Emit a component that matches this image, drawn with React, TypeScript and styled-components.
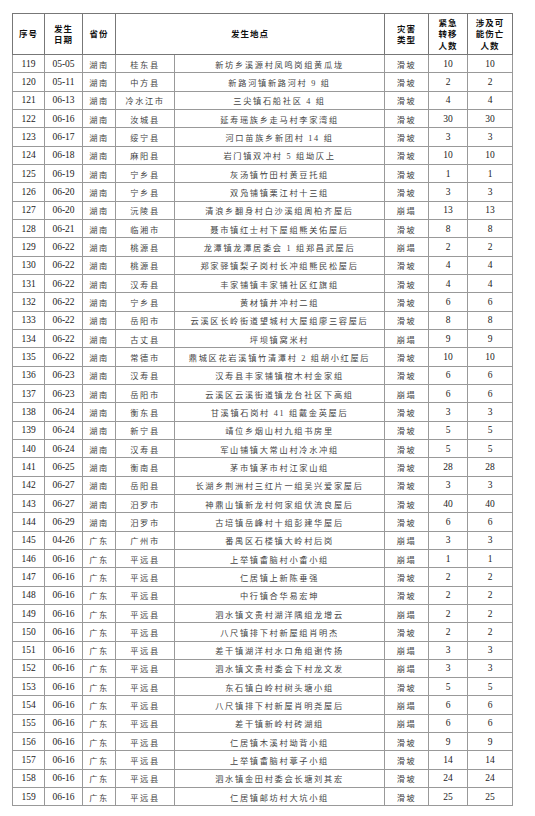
import React from 'react';
import styled, { createGlobalStyle } from 'styled-components';

const GlobalStyle = createGlobalStyle`
  html, body {
    margin: 0;
    padding: 0;
    background: #fff;
  }
`;

type Row = [number, string, string, string, string, string, number, number];

const rows: Row[] = [
  [119, '05-05', '湖南', '桂东县', '新坊乡溪源村凤鸣岗组黄瓜垅', '滑坡', 10, 10],
  [120, '05-11', '湖南', '中方县', '新路河镇新路河村 9 组', '滑坡', 2, 2],
  [121, '06-13', '湖南', '冷水江市', '三尖镇石船社区 4 组', '滑坡', 4, 4],
  [122, '06-16', '湖南', '汝城县', '延寿瑶族乡走马村李家湾组', '滑坡', 30, 30],
  [123, '06-17', '湖南', '绥宁县', '河口苗族乡新团村 14 组', '滑坡', 3, 3],
  [124, '06-18', '湖南', '麻阳县', '岩门镇双冲村 5 组坳仄上', '滑坡', 10, 10],
  [125, '06-19', '湖南', '宁乡县', '灰汤镇竹田村黄豆托组', '滑坡', 1, 1],
  [126, '06-20', '湖南', '宁乡县', '双凫铺镇栗江村十三组', '滑坡', 3, 3],
  [127, '06-20', '湖南', '沅陵县', '清浪乡翻身村白沙溪组周柏齐屋后', '崩塌', 13, 13],
  [128, '06-21', '湖南', '临湘市', '聂市镇红士村下屋组熊关佑屋后', '滑坡', 8, 8],
  [129, '06-22', '湖南', '桃源县', '龙潭镇龙潭居委会 1 组郑昌武屋后', '崩塌', 2, 2],
  [130, '06-22', '湖南', '桃源县', '郑家驿镇梨子岗村长冲组熊民松屋后', '滑坡', 4, 4],
  [131, '06-22', '湖南', '汉寿县', '丰家铺镇丰家铺社区红旗组', '滑坡', 4, 4],
  [132, '06-22', '湖南', '宁乡县', '黄材镇井冲村二组', '滑坡', 6, 6],
  [133, '06-22', '湖南', '岳阳市', '云溪区长岭街道望城村大屋组廖三容屋后', '滑坡', 8, 8],
  [134, '06-22', '湖南', '古丈县', '坪坝镇窝米村', '崩塌', 9, 9],
  [135, '06-22', '湖南', '常德市', '鼎城区花岩溪镇竹清潭村 2 组胡小红屋后', '滑坡', 10, 10],
  [136, '06-23', '湖南', '汉寿县', '汉寿县丰家铺镇椬木村金家组', '滑坡', 6, 6],
  [137, '06-23', '湖南', '岳阳市', '云溪区云溪街道镇龙台社区下高组', '崩塌', 6, 6],
  [138, '06-24', '湖南', '衡东县', '甘溪镇石岗村 41 组戴金英屋后', '滑坡', 3, 3],
  [139, '06-24', '湖南', '新宁县', '靖位乡烟山村九组书房里', '滑坡', 5, 5],
  [140, '06-24', '湖南', '汉寿县', '军山铺镇大常山村冷水冲组', '滑坡', 5, 5],
  [141, '06-25', '湖南', '衡南县', '茅市镇茅市村江家山组', '滑坡', 28, 28],
  [142, '06-27', '湖南', '岳阳县', '长湖乡荆洲村三红片一组吴兴爱家屋后', '滑坡', 3, 3],
  [143, '06-27', '湖南', '汨罗市', '神鼎山镇新龙村何家组伏流良屋后', '滑坡', 40, 40],
  [144, '06-29', '湖南', '汨罗市', '古培镇岳峰村十组彭建华屋后', '滑坡', 6, 6],
  [145, '04-26', '广东', '广州市', '番禺区石楼镇大岭村后岗', '崩塌', 3, 3],
  [146, '06-16', '广东', '平远县', '上举镇畲脑村小畲小组', '崩塌', 1, 1],
  [147, '06-16', '广东', '平远县', '仁居镇上新陈垂强', '滑坡', 2, 2],
  [148, '06-16', '广东', '平远县', '中行镇合华易宏坤', '滑坡', 2, 2],
  [149, '06-16', '广东', '平远县', '泗水镇文贵村湖洋隅组龙增云', '崩塌', 2, 2],
  [150, '06-16', '广东', '平远县', '八尺镇排下村新屋组肖明杰', '滑坡', 2, 2],
  [151, '06-16', '广东', '平远县', '差干镇湖洋村水口角组谢传扬', '崩塌', 3, 3],
  [152, '06-16', '广东', '平远县', '泗水镇文贵村委会下村龙文发', '崩塌', 3, 3],
  [153, '06-16', '广东', '平远县', '东石镇白岭村树头塘小组', '滑坡', 5, 5],
  [154, '06-16', '广东', '平远县', '八尺镇排下村新屋肖明尧屋后', '崩塌', 6, 6],
  [155, '06-16', '广东', '平远县', '差干镇新岭村砖湖组', '崩塌', 6, 6],
  [156, '06-16', '广东', '平远县', '仁居镇木溪村坳背小组', '滑坡', 9, 9],
  [157, '06-16', '广东', '平远县', '上举镇畲脑村葶子小组', '滑坡', 14, 14],
  [158, '06-16', '广东', '平远县', '泗水镇金田村委会长塘刘其宏', '滑坡', 24, 24],
  [159, '06-16', '广东', '平远县', '仁居镇邮坊村大坑小组', '滑坡', 25, 25],
];

const colWidths = [32, 38, 33, 59, 210, 44, 39, 45];

const Page = styled.div`
  padding: 13px 0 0 12px;
`;

const Table = styled.table`
  width: 500px;
  table-layout: fixed;
  border-collapse: collapse;
  border: 1.5px solid #555;
`;

const HeadCell = styled.th`
  height: 40px;
  padding: 0;
  border: 1px solid #777;
  font-family: "Noto Sans CJK SC", sans-serif;
  font-weight: 700;
  font-size: 8.5px;
  line-height: 11.5px;
  letter-spacing: 1px;
  color: #111;
  text-align: center;
  vertical-align: middle;
`;

const Cell = styled.td<{ $num?: boolean; $wide?: boolean }>`
  height: 17.33px;
  padding: 0;
  border: 1px solid #999;
  text-align: center;
  vertical-align: middle;
  white-space: nowrap;
  overflow: hidden;
  color: ${p => (p.$num ? '#222' : '#444')};
  font-family: ${p => (p.$num ? '"Liberation Serif", serif' : '"Liberation Serif", "Noto Sans CJK SC", serif')};
  font-size: ${p => (p.$num ? '9.5px' : '8.2px')};
  letter-spacing: ${p => (p.$num ? '0' : p.$wide ? '1.7px' : '1.6px')};
`;

export default function App() {
  return (
    <Page>
      <GlobalStyle />
      <Table>
        <colgroup>
          {colWidths.map((w, i) => (
            <col key={i} style={{ width: w }} />
          ))}
        </colgroup>
        <thead>
          <tr>
            <HeadCell>序号</HeadCell>
            <HeadCell>发生<br />日期</HeadCell>
            <HeadCell>省份</HeadCell>
            <HeadCell colSpan={2}>发生地点</HeadCell>
            <HeadCell>灾害<br />类型</HeadCell>
            <HeadCell>紧急<br />转移<br />人数</HeadCell>
            <HeadCell>涉及可<br />能伤亡<br />人数</HeadCell>
          </tr>
        </thead>
        <tbody>
          {rows.map(r => (
            <tr key={r[0]}>
              <Cell $num>{r[0]}</Cell>
              <Cell $num>{r[1]}</Cell>
              <Cell>{r[2]}</Cell>
              <Cell>{r[3]}</Cell>
              <Cell $wide>{r[4]}</Cell>
              <Cell>{r[5]}</Cell>
              <Cell $num>{r[6]}</Cell>
              <Cell $num>{r[7]}</Cell>
            </tr>
          ))}
        </tbody>
      </Table>
    </Page>
  );
}
